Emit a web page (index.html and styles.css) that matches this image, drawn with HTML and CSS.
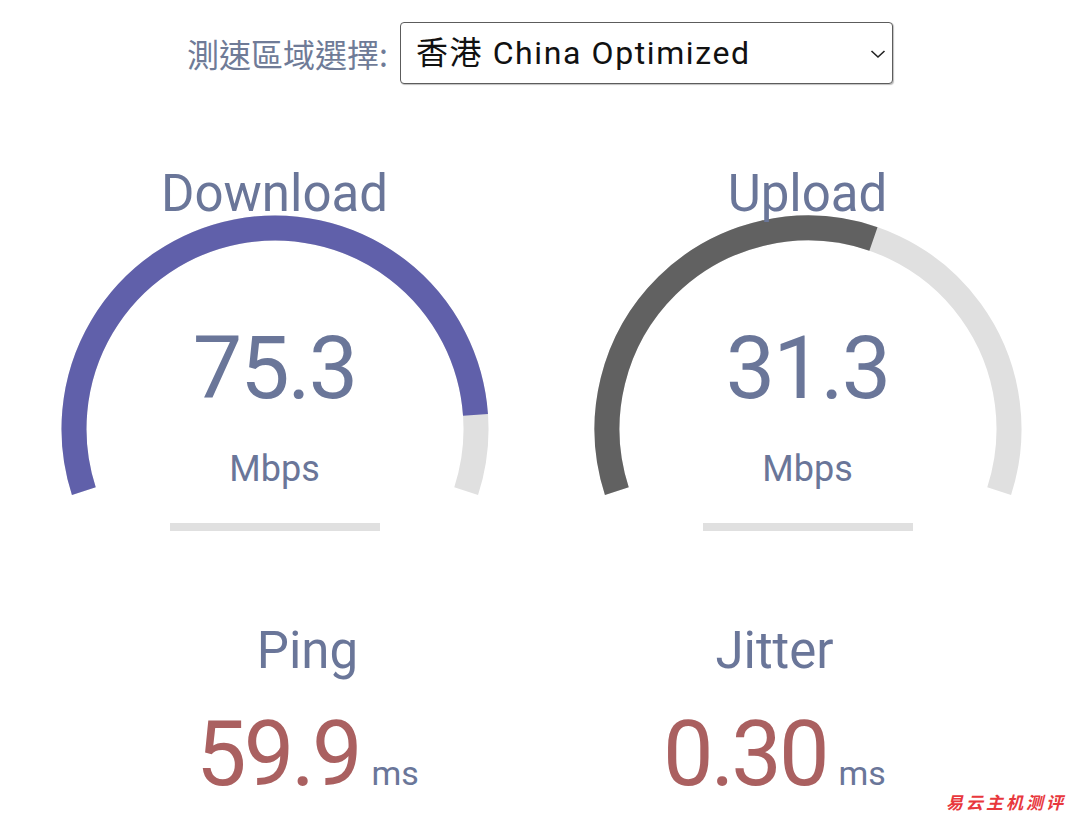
FILE: index.html
```html
<!DOCTYPE html>
<html lang="zh-Hant">
<head>
<meta charset="utf-8">
<title>Speedtest</title>
<link rel="stylesheet" href="styles.css">
</head>
<body>
<div class="page">
  <div class="header">
    <label class="server-label" for="server">測速區域選擇:</label>
    <div class="select-wrap">
      <select id="server" class="server-select">
        <option>香港 China Optimized</option>
      </select>
      <svg class="chevron" width="16" height="10" viewBox="0 0 16 10"><path d="M1.5 2 L8 8 L14.5 2" fill="none" stroke="#222" stroke-width="1.6"/></svg>
    </div>
  </div>

  <div class="gauges">
    <div class="gauge">
      <div class="gauge-title">Download</div>
      <div class="dial">
        <svg class="dial-svg" width="440" height="300" viewBox="0 0 440 300">
          <path d="M28.84 286.11 A201 201 0 1 1 411.16 286.11" fill="none" stroke="#e0e0e0" stroke-width="25"/>
          <path d="M28.84 286.11 A201 201 0 1 1 420.51 209.98" fill="none" stroke="#6060aa" stroke-width="25"/>
        </svg>
        <div class="dial-value">75.3</div>
        <div class="dial-unit">Mbps</div>
      </div>
      <div class="bar"></div>
    </div>
    <div class="gauge">
      <div class="gauge-title">Upload</div>
      <div class="dial">
        <svg class="dial-svg" width="440" height="300" viewBox="0 0 440 300">
          <path d="M28.84 286.11 A201 201 0 1 1 411.16 286.11" fill="none" stroke="#e0e0e0" stroke-width="25"/>
          <path d="M28.84 286.11 A201 201 0 0 1 285.44 33.95" fill="none" stroke="#616161" stroke-width="25"/>
        </svg>
        <div class="dial-value">31.3</div>
        <div class="dial-unit">Mbps</div>
      </div>
      <div class="bar"></div>
    </div>
  </div>

  <div class="latency">
    <div class="metric">
      <div class="metric-title">Ping</div>
      <div class="metric-line"><span class="metric-value">59.9</span><span class="metric-unit">ms</span></div>
    </div>
    <div class="metric">
      <div class="metric-title">Jitter</div>
      <div class="metric-line"><span class="metric-value">0.30</span><span class="metric-unit">ms</span></div>
    </div>
  </div>

  <div class="watermark">易云主机测评</div>
</div>
</body>
</html>
```

FILE: styles.css
```css
html, body {
  margin: 0;
  padding: 0;
  background: #ffffff;
}

body {
  font-family: Roboto, "Noto Sans CJK TC", sans-serif;
  color: #6a7699;
}

.page {
  position: relative;
  width: 1080px;
  height: 821px;
  overflow: hidden;
}

.header {
  display: flex;
  justify-content: center;
  align-items: center;
  gap: 12px;
  padding-top: 22px;
}

.server-label {
  font-family: "Noto Sans CJK TC", sans-serif;
  font-size: 32px;
  line-height: 62px;
  color: #6f7b97;
}

.select-wrap {
  position: relative;
}

.server-select {
  appearance: none;
  -webkit-appearance: none;
  width: 493px;
  height: 62px;
  box-sizing: border-box;
  border: 1px solid #5c5c5c;
  border-radius: 4px;
  background: #ffffff;
  padding: 0 40px 0 15px;
  font-family: Roboto, "Noto Sans CJK TC", sans-serif;
  font-size: 32px;
  letter-spacing: 1.6px;
  color: #111111;
  box-shadow: 1px 1px 1px rgba(0,0,0,0.25);
}

.chevron {
  position: absolute;
  right: 7px;
  top: 27px;
  pointer-events: none;
}

.gauges {
  display: flex;
  justify-content: center;
  padding-left: 2px;
  margin-top: 80px;
}

.gauge {
  width: 533px;
  display: flex;
  flex-direction: column;
  align-items: center;
}

.gauge-title {
  font-size: 51px;
  line-height: 60px;
  position: relative;
  z-index: 1;
}

.dial {
  position: relative;
  width: 440px;
  display: flex;
  flex-direction: column;
  align-items: center;
}

.dial-svg {
  position: absolute;
  left: 0;
  top: -19px;
}

.dial-value {
  position: relative;
  margin-top: 94px;
  font-size: 88px;
  line-height: 100px;
  letter-spacing: -2px;
}

.dial-unit {
  position: relative;
  margin-top: 29px;
  font-size: 36px;
  line-height: 44px;
}

.bar {
  margin-top: 32px;
  width: 210px;
  height: 8px;
  background: #e0e0e0;
}

.latency {
  display: flex;
  justify-content: center;
  padding-left: 2px;
  margin-top: 90px;
}

.metric {
  width: 467px;
  display: flex;
  flex-direction: column;
  align-items: center;
}

.metric-title {
  font-size: 51px;
  line-height: 60px;
}

.metric-line {
  margin-top: 24px;
  line-height: 100px;
  display: flex;
  align-items: baseline;
  gap: 12px;
}

.metric-value {
  font-size: 90px;
  color: #aa6060;
  letter-spacing: -3px;
}

.metric-unit {
  font-size: 34px;
  color: #6a7699;
}

.watermark {
  position: absolute;
  right: 14px;
  bottom: 11px;
  font-family: "Noto Sans CJK SC", sans-serif;
  font-size: 17px;
  line-height: 17px;
  font-weight: 700;
  font-style: italic;
  letter-spacing: 3px;
  color: #e8383d;
}
```
